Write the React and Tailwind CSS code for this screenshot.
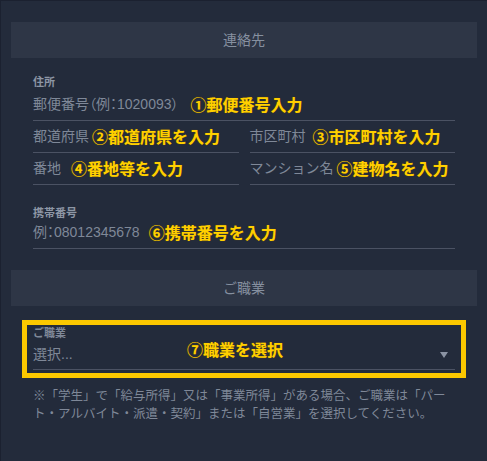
import React from "react";

const font = { fontFamily: '"Liberation Sans", "Noto Sans CJK JP", sans-serif' };

function Note({ children }) {
  return (
    <span className="text-[16px] leading-[22px] font-bold text-[#ffd000] whitespace-nowrap [text-shadow:0_0_1px_#7a5a00]">
      {children}
    </span>
  );
}

function Field({ label, placeholder, note, gap = "gap-[6px]", labelGap = "mt-[6px]", palt = false }) {
  return (
    <div className="border-b border-[#4b5263]">
      {label && (
        <div className="text-[11px] leading-[14px] font-bold text-[#8d96a5]">{label}</div>
      )}
      <div className={`flex items-center ${gap} pb-[3px] ${label ? labelGap : ""}`}>
        <span
          className={`relative -top-[2px] text-[14px] leading-[20px] text-[#7f8898] whitespace-nowrap ${
            palt ? "[font-feature-settings:'palt']" : ""
          }`}
        >
          {placeholder}
        </span>
        <Note>{note}</Note>
      </div>
    </div>
  );
}

function Band({ children }) {
  return (
    <div className="h-[36px] bg-[#2e3646] flex items-center justify-center text-[14px] text-[#8690a0]">
      {children}
    </div>
  );
}

export default function App() {
  return (
    <div style={font} className="w-[487px] h-[461px] bg-[#232b3b] border-t border-l border-[#1b2130] overflow-hidden">
      <div className="px-[10px] pt-[21px]">
        <Band>連絡先</Band>

        <div className="px-[22px] pt-[17px]">
          <Field
            label="住所"
            placeholder="郵便番号（例：1020093）"
            note="①郵便番号入力"
            gap="gap-[12px]"
            palt
          />

          <div className="grid grid-cols-2 gap-x-[11px]">
            <div className="pt-[6px]">
              <Field placeholder="都道府県" note="②都道府県を入力" gap="gap-[3px]" />
            </div>
            <div className="pt-[6px]">
              <Field placeholder="市区町村" note="③市区町村を入力" gap="gap-[7px]" />
            </div>
            <div className="pt-[6px]">
              <Field placeholder="番地" note="④番地等を入力" gap="gap-[10px]" />
            </div>
            <div className="pt-[6px]">
              <Field placeholder="マンション名" note="⑤建物名を入力" gap="gap-[3px]" />
            </div>
          </div>

          <div className="pt-[21px]">
            <Field
              label="携帯番号"
              placeholder="例：08012345678"
              note="⑥携帯番号を入力"
              gap="gap-[9px]"
              labelGap="mt-[3px]"
              palt
            />
          </div>
        </div>

        <div className="pt-[21px]">
          <Band>ご職業</Band>
        </div>

        <div className="px-[11px] pt-[14px]">
          <div className="relative border-[5px] border-[#fcc800] px-[6px] pt-[1px] pb-[3px]">
            <div className="border-b border-[#4b5263]">
              <div className="text-[11px] leading-[14px] font-bold text-[#7f8898]">ご職業</div>
              <div className="flex items-center justify-between pt-[4px] pb-[5px]">
                <span className="text-[14px] leading-[20px] text-[#7f8898]">選択...</span>
                <svg width="8" height="6" viewBox="0 0 8 6" className="mr-[7px] mt-[2px]">
                  <path d="M0 0 H8 L4 6 Z" fill="#8a93a3" />
                </svg>
              </div>
            </div>
            <div className="absolute left-[160px] top-[14px]">
              <Note>⑦職業を選択</Note>
            </div>
          </div>

          <p className="px-[11px] pt-[9px] text-[12.5px] leading-[18px] text-[#7f8898]">
            ※「学生」で「給与所得」又は「事業所得」がある場合、ご職業は「パート・アルバイト・派遣・契約」または「自営業」を選択してください。
          </p>
        </div>
      </div>
    </div>
  );
}
